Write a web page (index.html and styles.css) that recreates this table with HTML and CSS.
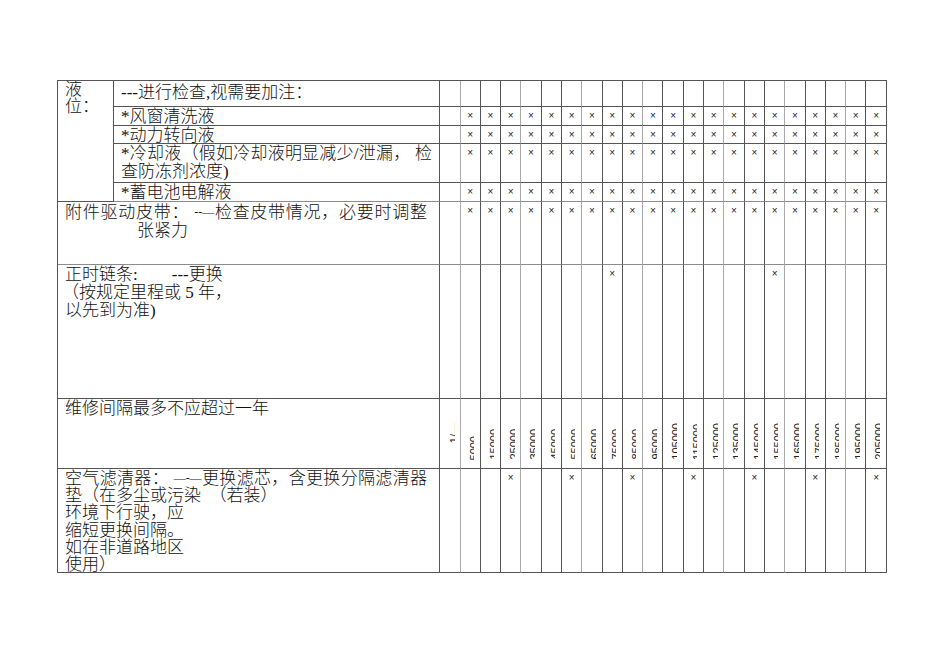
FILE: index.html
```html
<!DOCTYPE html>
<html lang="zh-CN">
<head>
<meta charset="utf-8">
<title>保养计划表</title>
<link rel="stylesheet" href="styles.css">
</head>
<body>
<div class="sheet">
<div class="g">
  <!-- row 1 -->
  <div class="c t rs5 lv">液<br>位：</div>
  <div class="c t r1">---进行检查,视需要加注：</div>
  <div class="c lt"></div>
  <div class="c"></div><div class="c"></div><div class="c lt"></div>
  <div class="c"></div><div class="c"></div><div class="c lt"></div>
  <div class="c"></div><div class="c"></div><div class="c lt"></div>
  <div class="c"></div><div class="c"></div><div class="c"></div><div class="c lt"></div>
  <div class="c"></div><div class="c"></div><div class="c lt"></div>
  <div class="c"></div><div class="c"></div><div class="c lt"></div>
  <div class="c"></div><div class="c"></div>

  <!-- row 2 -->
  <div class="c t">*风窗清洗液</div>
  <div class="c lt"></div>
  <div class="c x">×</div><div class="c x">×</div><div class="c x lt">×</div>
  <div class="c x">×</div><div class="c x">×</div><div class="c x lt">×</div>
  <div class="c x">×</div><div class="c x">×</div><div class="c x lt">×</div>
  <div class="c x">×</div><div class="c x">×</div><div class="c x">×</div><div class="c x lt">×</div>
  <div class="c x">×</div><div class="c x">×</div><div class="c x lt">×</div>
  <div class="c x">×</div><div class="c x">×</div><div class="c x lt">×</div>
  <div class="c x">×</div><div class="c x">×</div>

  <!-- row 3 -->
  <div class="c t">*动力转向液</div>
  <div class="c lt"></div>
  <div class="c x">×</div><div class="c x">×</div><div class="c x lt">×</div>
  <div class="c x">×</div><div class="c x">×</div><div class="c x lt">×</div>
  <div class="c x">×</div><div class="c x">×</div><div class="c x lt">×</div>
  <div class="c x">×</div><div class="c x">×</div><div class="c x">×</div><div class="c x lt">×</div>
  <div class="c x">×</div><div class="c x">×</div><div class="c x lt">×</div>
  <div class="c x">×</div><div class="c x">×</div><div class="c x lt">×</div>
  <div class="c x">×</div><div class="c x">×</div>

  <!-- row 4 -->
  <div class="c t">
    <div class="jl">*冷却液（假如冷却液明显减少/泄漏，&nbsp;检</div>
    <div>查防冻剂浓度)</div>
  </div>
  <div class="c lt"></div>
  <div class="c x">×</div><div class="c x">×</div><div class="c x lt">×</div>
  <div class="c x">×</div><div class="c x">×</div><div class="c x lt">×</div>
  <div class="c x">×</div><div class="c x">×</div><div class="c x lt">×</div>
  <div class="c x">×</div><div class="c x">×</div><div class="c x">×</div><div class="c x lt">×</div>
  <div class="c x">×</div><div class="c x">×</div><div class="c x lt">×</div>
  <div class="c x">×</div><div class="c x">×</div><div class="c x lt">×</div>
  <div class="c x">×</div><div class="c x">×</div>

  <!-- row 5 -->
  <div class="c t hb">*蓄电池电解液</div>
  <div class="c lt hb"></div>
  <div class="c x hb">×</div><div class="c x hb">×</div><div class="c x lt hb">×</div>
  <div class="c x hb">×</div><div class="c x hb">×</div><div class="c x lt hb">×</div>
  <div class="c x hb">×</div><div class="c x hb">×</div><div class="c x lt hb">×</div>
  <div class="c x hb">×</div><div class="c x hb">×</div><div class="c x hb">×</div><div class="c x lt hb">×</div>
  <div class="c x hb">×</div><div class="c x hb">×</div><div class="c x lt hb">×</div>
  <div class="c x hb">×</div><div class="c x hb">×</div><div class="c x lt hb">×</div>
  <div class="c x hb">×</div><div class="c x hb">×</div>

  <!-- row 6 -->
  <div class="c t cs2 wide hb">
    <div class="jl">附件驱动皮带：&nbsp;<span class="dash">--—</span>检查皮带情况，必要时调整</div>
    <div class="ind">张紧力</div>
  </div>
  <div class="c lt hb"></div>
  <div class="c x hb">×</div><div class="c x hb">×</div><div class="c x lt hb">×</div>
  <div class="c x hb">×</div><div class="c x hb">×</div><div class="c x lt hb">×</div>
  <div class="c x hb">×</div><div class="c x hb">×</div><div class="c x lt hb">×</div>
  <div class="c x hb">×</div><div class="c x hb">×</div><div class="c x hb">×</div><div class="c x lt hb">×</div>
  <div class="c x hb">×</div><div class="c x hb">×</div><div class="c x lt hb">×</div>
  <div class="c x hb">×</div><div class="c x hb">×</div><div class="c x lt hb">×</div>
  <div class="c x hb">×</div><div class="c x hb">×</div>

  <!-- row 7 -->
  <div class="c t cs2">
    <div>正时链条:&nbsp;&nbsp;&nbsp;&nbsp;&nbsp;&nbsp;&nbsp;&nbsp;---更换</div>
    <div class="paren">（按规定里程或 5 年，</div>
    <div>以先到为准)</div>
  </div>
  <div class="c lt"></div>
  <div class="c"></div><div class="c"></div><div class="c lt"></div>
  <div class="c"></div><div class="c"></div><div class="c lt"></div>
  <div class="c"></div><div class="c x">×</div><div class="c lt"></div>
  <div class="c"></div><div class="c"></div><div class="c"></div><div class="c lt"></div>
  <div class="c"></div><div class="c"></div><div class="c x lt">×</div>
  <div class="c"></div><div class="c"></div><div class="c lt"></div>
  <div class="c"></div><div class="c"></div>

  <!-- row 8 -->
  <div class="c t cs2">维修间隔最多不应超过一年</div>
  <div class="c lt vc first"><div class="clip"><span class="vt">1/—</span></div></div>
  <div class="c vc"><div class="clip"><span class="vt">5000</span></div></div>
  <div class="c vc"><div class="clip"><span class="vt">15000</span></div></div>
  <div class="c vc lt"><div class="clip"><span class="vt">25000</span></div></div>
  <div class="c vc"><div class="clip"><span class="vt">35000</span></div></div>
  <div class="c vc"><div class="clip"><span class="vt">45000</span></div></div>
  <div class="c vc lt"><div class="clip"><span class="vt">55000</span></div></div>
  <div class="c vc"><div class="clip"><span class="vt">65000</span></div></div>
  <div class="c vc"><div class="clip"><span class="vt">75000</span></div></div>
  <div class="c vc lt"><div class="clip"><span class="vt">85000</span></div></div>
  <div class="c vc"><div class="clip"><span class="vt">95000</span></div></div>
  <div class="c vc"><div class="clip"><span class="vt">105000</span></div></div>
  <div class="c vc"><div class="clip"><span class="vt">115000</span></div></div>
  <div class="c vc lt"><div class="clip"><span class="vt">125000</span></div></div>
  <div class="c vc"><div class="clip"><span class="vt">135000</span></div></div>
  <div class="c vc"><div class="clip"><span class="vt">145000</span></div></div>
  <div class="c vc lt"><div class="clip"><span class="vt">155000</span></div></div>
  <div class="c vc"><div class="clip"><span class="vt">165000</span></div></div>
  <div class="c vc"><div class="clip"><span class="vt">175000</span></div></div>
  <div class="c vc lt"><div class="clip"><span class="vt">185000</span></div></div>
  <div class="c vc"><div class="clip"><span class="vt">195000</span></div></div>
  <div class="c vc"><div class="clip"><span class="vt">205000</span></div></div>

  <!-- row 9 -->
  <div class="c t cs2 wide air">
    <div class="jl">空气滤清器：&nbsp;<span class="dash">—-—</span>更换滤芯，含更换分隔滤清器</div>
    <div>垫（在多尘或污染&nbsp;&nbsp;（若装）</div>
    <div>环境下行驶，应</div>
    <div>缩短更换间隔。</div>
    <div>如在非道路地区</div>
    <div>使用）</div>
  </div>
  <div class="c lt"></div>
  <div class="c"></div><div class="c"></div><div class="c x lt">×</div>
  <div class="c"></div><div class="c"></div><div class="c x lt">×</div>
  <div class="c"></div><div class="c"></div><div class="c x lt">×</div>
  <div class="c"></div><div class="c"></div><div class="c x">×</div><div class="c lt"></div>
  <div class="c"></div><div class="c x">×</div><div class="c lt"></div>
  <div class="c"></div><div class="c x">×</div><div class="c lt"></div>
  <div class="c"></div><div class="c x">×</div>
</div>
</div>
</body>
</html>
```

FILE: styles.css
```css
html, body {
  margin: 0;
  padding: 0;
  background: #fff;
}

body {
  width: 950px;
  height: 672px;
  overflow: hidden;
}

.sheet {
  padding: 80px 0 0 57px;
}

.g {
  display: grid;
  width: max-content;
  grid-template-columns: 56px 326px 20.5px repeat(21, 20.3px);
  grid-template-rows: 26px 19px 18px 39px 19px 63px 134px 70px 104px;
  border-left: 1px solid #555;
  border-top: 1px solid #555;
  font-family: "Liberation Serif", "Noto Sans CJK SC", serif;
  font-size: 17px;
  line-height: 18px;
  font-weight: 300;
  color: #111;
}

.c {
  box-sizing: border-box;
  border-right: 1px solid #555;
  border-bottom: 1px solid #555;
  min-width: 0;
  overflow: hidden;
}

.lt {
  border-right-color: #a8a8a8;
}

.hb {
  border-bottom-color: #8c8c8c;
}

.t {
  padding: 1px 7px 0 7px;
  white-space: nowrap;
}

.wide {
  padding-right: 12px;
}

.rs5 {
  grid-row: span 5;
}

.cs2 {
  grid-column: span 2;
}

.lv {
  line-height: 17px;
  padding-top: 0;
}

.r1 {
  padding-top: 3px;
}

.jl {
  text-align: justify;
  text-align-last: justify;
}

.dash {
  font-size: 12px;
  vertical-align: 2px;
}

.ind {
  padding-left: 72px;
}

.paren {
  margin-left: -3px;
}

.air {
  line-height: 17.2px;
}

.x {
  text-align: center;
  font-family: "Liberation Sans", sans-serif;
  font-size: 10px;
  line-height: 18px;
  font-weight: 400;
  color: #222;
}

.vc {
  display: flex;
  flex-direction: column;
  justify-content: flex-end;
  padding: 0 0 8px 8px;
}

.vc.first {
  padding-bottom: 25px;
  padding-left: 9px;
}

.clip {
  width: 5.5px;
  overflow: hidden;
  font-size: 0;
  line-height: 0;
}

.vt {
  display: inline-block;
  vertical-align: bottom;
  writing-mode: vertical-rl;
  transform: rotate(180deg);
  font-family: "Liberation Sans", sans-serif;
  font-size: 11px;
  line-height: 11px;
  font-weight: 400;
  white-space: nowrap;
  color: #222;
}
```
